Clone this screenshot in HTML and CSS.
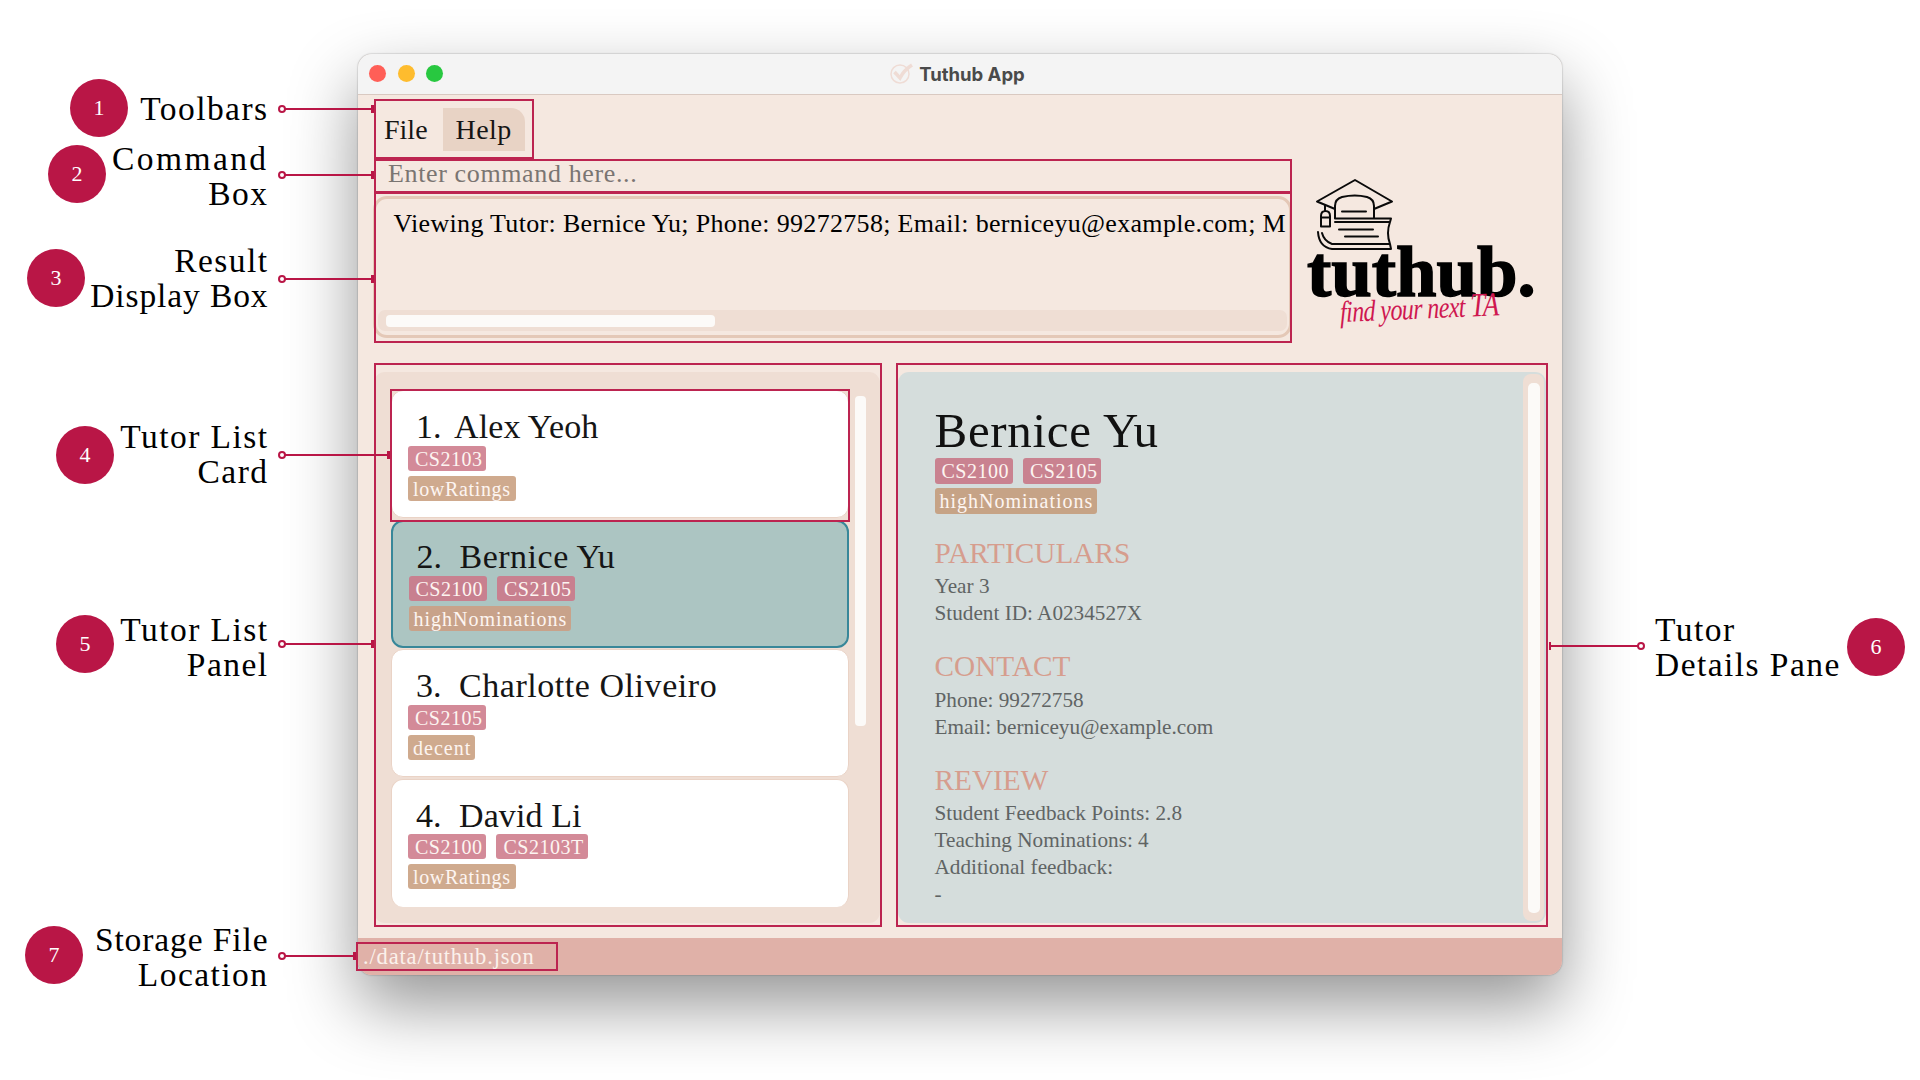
FILE: index.html
```html
<!DOCTYPE html>
<html lang="en">
<head>
<meta charset="utf-8">
<title>Tuthub App</title>
<link rel="stylesheet" href="styles.css">
</head>
<body>
<main class="window">
  <header class="titlebar">
    <div class="lights"><i class="red"></i><i class="amber"></i><i class="green"></i></div>
    <h1 class="title">
      <svg width="24" height="22" viewBox="0 0 24 22" fill="none" stroke="#efdcd5"><circle cx="10" cy="11" r="9" stroke-width="1.5"/><path d="M4.500 9l5.500 6Q14 7 22 2" stroke-width="3.500"/></svg>
      Tuthub App
    </h1>
  </header>

  <section class="top">
    <div class="controls">
      <nav class="menu"><span class="menu-item">File</span><span class="menu-item active">Help</span></nav>
      <div class="command">Enter command here...</div>
      <div class="result">
        <p class="result-text">Viewing Tutor: Bernice Yu; Phone: 99272758; Email: berniceyu@example.com; M</p>
        <div class="hscroll"><i></i></div>
      </div>
    </div>
    <div class="logo">
      <svg class="logo-mark" width="80" height="74" viewBox="0 0 80 74" fill="none" stroke="#0a0a0a" stroke-width="2" stroke-linejoin="round" stroke-linecap="round">
        <path d="M20 31L2 23.500L40 2l37 21.500L59 31"/>
        <path d="M20 40V28q0-7 7-9 13-3 25 0 7 2 7 9v12"/>
        <path d="M27 33.500h24M10 27v6M6 48.500V38q0-5 4.500-5t4.500 5v10.500zM6 39.500h9"/>
        <path d="M20 40.500h56l-1 3.500H20M75 44q-4 11 0 22l1 5H17Q4 69 3 54M7 55q2 8 10 11h58M24 51.500h34M30 58.500h33"/>
      </svg>
      <div class="logo-name">tuthub.</div>
      <div class="logo-tag">find your next <span class="ta">TA</span></div>
    </div>
  </section>

  <section class="panes">
    <div class="list">
      <div class="cards">
        <article class="card">
          <h2><span class="num one">1.</span><span class="n-alex">Alex Yeoh</span></h2>
          <div class="chips"><b class="mod">CS2103</b></div>
          <div class="chips"><b class="tag">lowRatings</b></div>
        </article>
        <article class="card selected">
          <h2><span class="num">2.</span><span class="n-bernice">Bernice Yu</span></h2>
          <div class="chips"><b class="mod">CS2100</b><b class="mod">CS2105</b></div>
          <div class="chips"><b class="tag wide">highNominations</b></div>
        </article>
        <article class="card">
          <h2><span class="num">3.</span><span class="n-charlotte">Charlotte Oliveiro</span></h2>
          <div class="chips"><b class="mod">CS2105</b></div>
          <div class="chips"><b class="tag wide">decent</b></div>
        </article>
        <article class="card last">
          <h2><span class="num">4.</span>David Li</h2>
          <div class="chips"><b class="mod">CS2100</b><b class="mod">CS2103T</b></div>
          <div class="chips"><b class="tag">lowRatings</b></div>
        </article>
      </div>
      <div class="list-scroll"></div>
    </div>

    <div class="details">
      <div class="details-body">
        <h2 class="details-name">Bernice Yu</h2>
        <div class="chips"><b class="mod">CS2100</b><b class="mod">CS2105</b></div>
        <div class="chips"><b class="tag wide">highNominations</b></div>
        <h3>PARTICULARS</h3>
        <p>Year 3</p>
        <p>Student ID: A0234527X</p>
        <h3>CONTACT</h3>
        <p>Phone: 99272758</p>
        <p>Email: berniceyu@example.com</p>
        <h3>REVIEW</h3>
        <p>Student Feedback Points: 2.8</p>
        <p>Teaching Nominations: 4</p>
        <p>Additional feedback:</p>
        <p>-</p>
      </div>
      <div class="vscroll"><i></i></div>
    </div>
  </section>

  <footer class="status">./data/tuthub.json</footer>
</main>

<!-- Annotation layer over the window -->
<div class="frame f-toolbar"></div>
<div class="frame f-command"></div>
<div class="frame f-result"></div>
<div class="frame f-card"></div>
<div class="frame f-list"></div>
<div class="frame f-details"></div>
<div class="frame f-status"></div>

<div class="line l1"></div>
<div class="line l2"></div>
<div class="line l3"></div>
<div class="line l4"></div>
<div class="line l5"></div>
<div class="line right l6"></div>
<div class="line l7"></div>

<div class="dot d1">1</div>
<div class="dot d2">2</div>
<div class="dot d3">3</div>
<div class="dot d4">4</div>
<div class="dot d5">5</div>
<div class="dot d6">6</div>
<div class="dot d7">7</div>

<div class="label t1">Toolbars</div>
<div class="label t2"><span class="loose">Command</span><br>Box</div>
<div class="label t3">Result<br><span class="snug">Display Box</span></div>
<div class="label t4">Tutor List<br>Card</div>
<div class="label t5">Tutor List<br>Panel</div>
<div class="label t6">Tutor<br>Details Pane</div>
<div class="label t7"><span class="snug">Storage File</span><br>Location</div>
</body>
</html>
```
FILE: styles.css
```css
*, *::before { box-sizing: border-box; margin: 0; padding: 0; }

:root {
  --accent: #b91646;
  --blush: #f5e8e0;
  --sand: #efded4;
  --thumb: #fcfaf8;
}

body {
  width: 1920px;
  height: 1080px;
  overflow: hidden;
  position: relative;
  background: #fff;
  font-family: "Liberation Serif", serif;
  color: #151515;
}

h1, h2, h3, b { font-weight: 400; }
i { display: block; }

/* Window */
.window {
  width: 1204px;
  height: 921px;
  margin: 54px 0 0 358px;
  display: flex;
  flex-direction: column;
  background: var(--blush);
  border-radius: 14px;
  overflow: hidden;
  box-shadow: 0 30px 68px rgba(0, 0, 0, .42), 0 0 1.5px rgba(0, 0, 0, .5);
}

.titlebar {
  height: 41px;
  flex: none;
  display: grid;
  grid-template-columns: 1fr auto 1fr;
  align-items: center;
  padding-bottom: 1px;
  background: #f4f4f4;
  border-bottom: 1px solid #d9c9c1;
}

.lights { display: flex; gap: 11.500px; padding-left: 11px; }
.lights i { width: 17px; height: 17px; border-radius: 50%; }
.red { background: #ff5f57; }
.amber { background: #febc2e; }
.green { background: #28c840; }

.title {
  display: flex;
  align-items: center;
  gap: 5px;
  margin-left: -5px;
  font: 700 18.500px Inter, sans-serif;
  color: #4a4a4a;
}

/* Toolbar, command box, result box */
.top { display: flex; height: 277px; flex: none; }
.controls { width: 919px; margin-left: 15px; padding-top: 13px; flex: none; }

.menu { display: flex; height: 53px; }
.menu-item {
  height: 43px;
  padding: 0 13px 0 11px;
  font-size: 28px;
  line-height: 43px;
}
.menu-item.active {
  margin-left: 2px;
  width: 82px;
  padding-left: 13px;
  letter-spacing: .4px;
  background: #e8d3c5;
  border-top-right-radius: 14px;
}

.command {
  height: 35px;
  padding-left: 15px;
  font-size: 26px;
  line-height: 25px;
  letter-spacing: .63px;
  color: #7a7572;
}

.result {
  display: flex;
  flex-direction: column;
  justify-content: space-between;
  height: 142px;
  padding: 10px 2px 4px;
  border: 3px solid #e4c8b7;
  border-radius: 14px;
}
.result-text {
  padding-left: 15.500px;
  font-size: 26px;
  line-height: 30px;
  letter-spacing: .32px;
  white-space: nowrap;
  color: #000;
}
.hscroll { height: 21px; padding: 5px 8px; background: var(--sand); border-radius: 7px; }
.hscroll i { width: 329px; height: 12px; background: var(--thumb); border-radius: 4px; }

/* Logo */
.logo { padding: 83px 0 0 15px; width: 270px; }
.logo-mark { display: block; margin-left: 8px; }
.logo-name {
  margin-top: -20px;
  font-size: 72.800px;
  font-weight: 700;
  line-height: 80px;
  color: #000;
  -webkit-text-stroke: 1.500px #000;
}
.logo-tag {
  margin: -15px 0 0 33px;
  font-size: 24px;
  font-style: italic;
  line-height: 28px;
  letter-spacing: -.6px;
  white-space: nowrap;
  color: #cf1750;
  transform: scaleY(1.25) rotate(-2deg);
  transform-origin: left center;
}
.ta { font-size: 27px; }

/* Lower panes */
.panes { display: flex; gap: 18px; height: 551px; padding-left: 16px; flex: none; }

.list {
  display: flex;
  gap: 6px;
  width: 506px;
  padding: 18px 0 0 16.500px;
  background: var(--sand);
  border-radius: 11px;
}
.cards { display: flex; flex-direction: column; gap: 1.500px; width: 458px; }
.card {
  height: 128px;
  padding: 16px 0 0 16.500px;
  background: #fff;
  border: 1.500px solid #ead3c6;
  border-radius: 12px;
}
.card.selected { background: #acc5c2; border: 2px solid #388799; padding: 15.500px 0 0 16px; }
.card.last { border-bottom: 0; }
.card h2 { display: flex; padding-left: 8px; font-size: 34px; line-height: 39px; letter-spacing: .1px; }
.num { width: 43px; }
.num.one { width: 38px; }
.n-alex { letter-spacing: .1px; }
.n-bernice { letter-spacing: .5px; }
.n-charlotte { letter-spacing: .55px; }

.chips { display: flex; gap: 10px; margin-bottom: 5px; }
.card .chips { position: relative; top: -.5px; }
.chips b {
  height: 25px;
  padding: 0 5px;
  font-size: 20px;
  line-height: 26px;
  color: #fdf5f1;
  border-radius: 3px;
}
.chips .mod { padding: 0 4px 0 7px; letter-spacing: .5px; background: rgba(197, 101, 120, .76); }
.chips .tag { letter-spacing: .65px; background: rgba(194, 146, 110, .78); }
.chips .wide { letter-spacing: 1px; padding-right: 3.500px; }
.selected .mod { background: rgba(208, 110, 130, .8); }
.selected .tag { background: rgba(208, 152, 122, .78); }

.list-scroll { width: 11px; height: 330px; margin-top: 6px; background: var(--thumb); border-radius: 4px; }

.details {
  display: flex;
  justify-content: space-between;
  width: 648px;
  padding-right: 2px;
  background: #d5dddc;
  border-radius: 11px;
}
.details-body { padding: 30.500px 0 0 36.500px; }
.details-body .chips { margin-bottom: 4px; }
.details-body .chips b { height: 26px; }
.details-name {
  margin-bottom: -.5px;
  font-size: 49px;
  line-height: 56px;
  letter-spacing: .7px;
  color: #111;
}
.details-body h3 { margin: 21.700px 0 3.800px; font-size: 29.300px; line-height: 34px; color: #d69d8e; }
.details-body p { font-size: 21.230px; line-height: 27px; color: #606464; }

.vscroll { width: 21px; height: 547px; margin-top: 2px; padding: 9px 4.500px 0; background: var(--sand); border-radius: 8px; }
.vscroll i { height: 530px; background: var(--thumb); border-radius: 5px; }

.status {
  margin-top: auto;
  height: 37px;
  padding-left: 5px;
  font-size: 22.500px;
  line-height: 37px;
  letter-spacing: .85px;
  color: #fbf1ec;
  background: #e0b1a8;
}

/* Annotation layer */
.frame { position: absolute; border: 2px solid #bc2450; }
.f-toolbar { left: 374px; top: 99px; width: 160px; height: 60px; }
.f-command { left: 374px; top: 159px; width: 918px; height: 34px; }
.f-result { left: 374px; top: 192px; width: 918px; height: 151px; }
.f-card { left: 390px; top: 389px; width: 460px; height: 133px; }
.f-list { left: 374px; top: 363px; width: 508px; height: 564px; }
.f-details { left: 896px; top: 363px; width: 652px; height: 564px; }
.f-status { left: 356px; top: 942px; width: 202px; height: 29px; }

/* Connector: hollow ring on the outer end, small cap on the frame */
.line {
  position: absolute;
  left: 285px;
  width: 89px;
  height: 8px;
  background: linear-gradient(var(--accent), var(--accent)) center / 100% 2px no-repeat;
  border-right: 3px solid var(--accent);
}
.line::before {
  content: "";
  position: absolute;
  left: -7px;
  top: 0;
  width: 8px;
  height: 8px;
  border: 2px solid var(--accent);
  border-radius: 50%;
  background: #fff;
}
.line.right { left: 1549px; border-right: 0; border-left: 2.500px solid var(--accent); }
.line.right::before { left: auto; right: -7px; }
.l1 { top: 105px; }
.l2 { top: 171px; }
.l3 { top: 275px; }
.l4 { top: 451px; width: 105px; }
.l5 { top: 640px; }
.l6 { top: 642px; }
.l7 { top: 952px; width: 71px; }

.dot {
  position: absolute;
  width: 58px;
  height: 58px;
  border-radius: 50%;
  background: var(--accent);
  color: #fff;
  font-size: 22px;
  line-height: 58px;
  text-align: center;
}
.d1 { left: 70px; top: 79px; }
.d2 { left: 48px; top: 145px; }
.d3 { left: 27px; top: 249px; }
.d4 { left: 56px; top: 426px; }
.d5 { left: 56px; top: 615px; }
.d6 { left: 1847px; top: 618px; }
.d7 { left: 25px; top: 926px; }

.label {
  position: absolute;
  right: 1651.500px;
  font-size: 33.500px;
  line-height: 35px;
  letter-spacing: 1.450px;
  text-align: right;
  white-space: nowrap;
  color: #000;
}
.loose { letter-spacing: 2.400px; }
.snug { letter-spacing: .900px; }
.t1 { top: 91px; }
.t2 { top: 141px; }
.t3 { top: 243px; }
.t4 { top: 419px; }
.t5 { top: 612px; }
.t6 { top: 612px; right: auto; left: 1655px; text-align: left; }
.t7 { top: 922px; }
```
